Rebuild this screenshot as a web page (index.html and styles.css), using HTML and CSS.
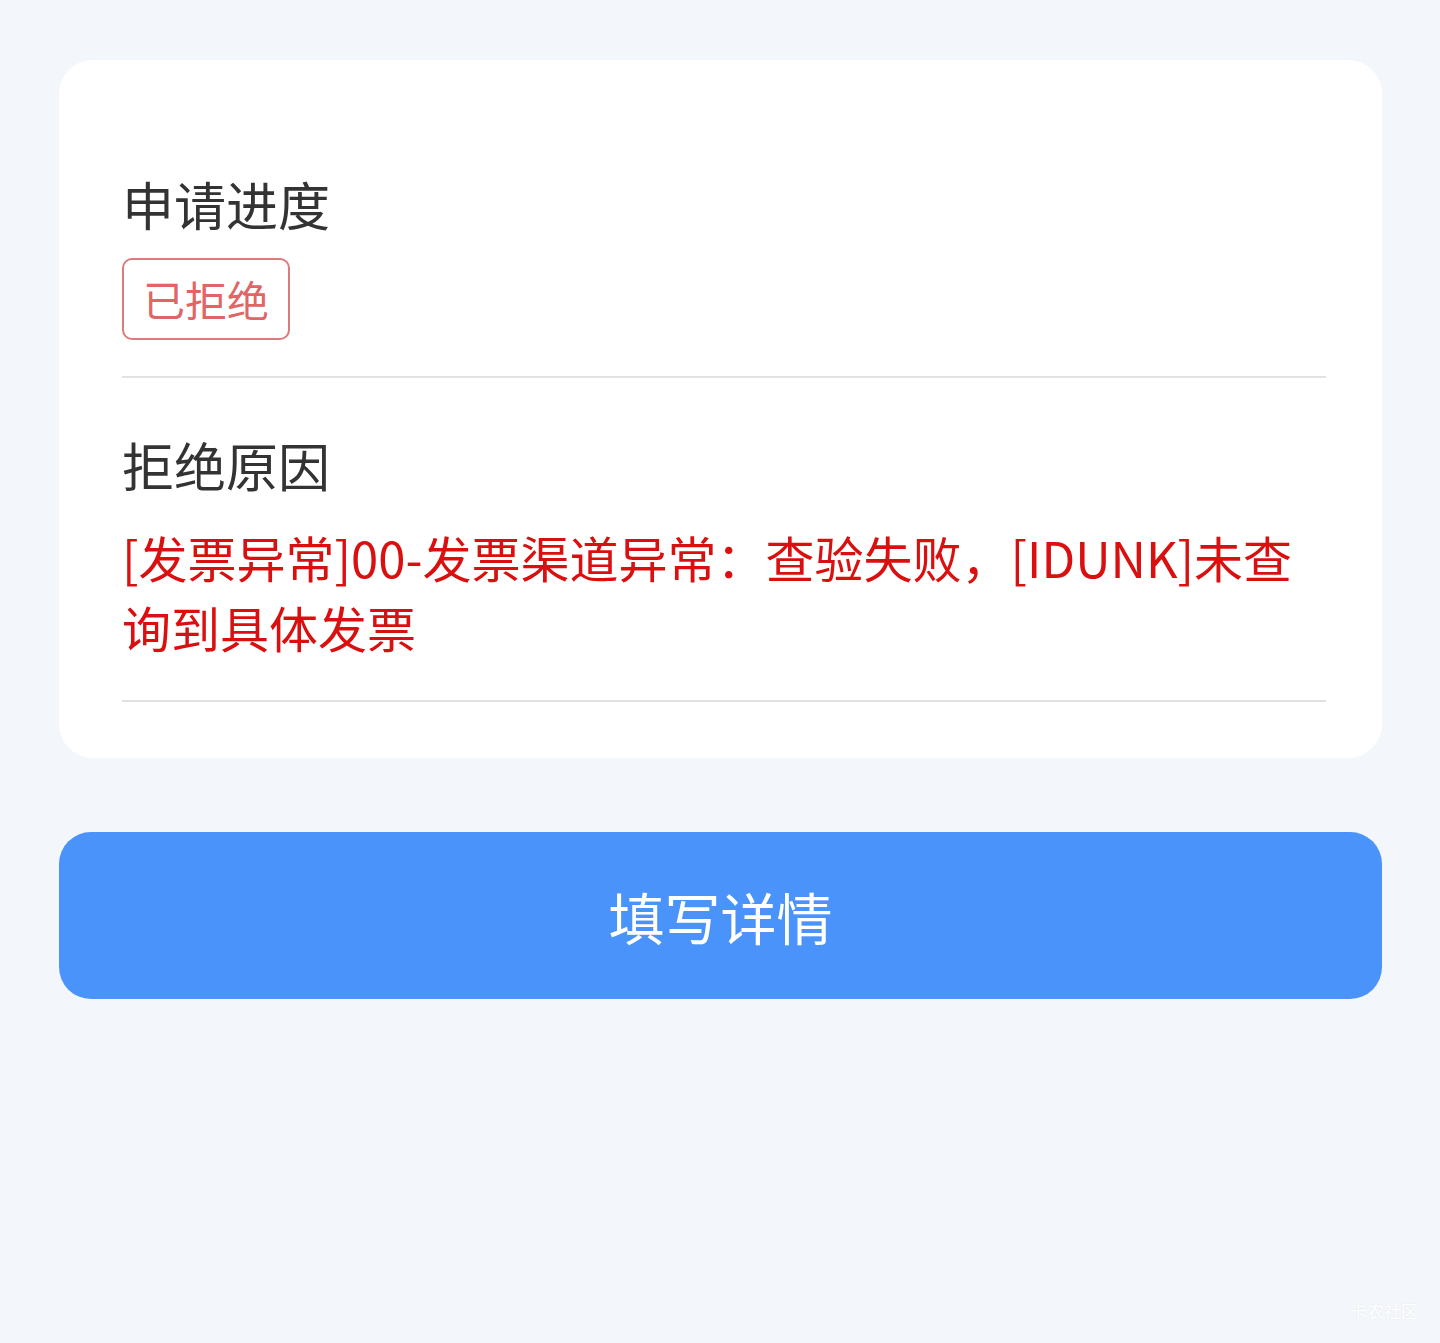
FILE: index.html
```html
<!DOCTYPE html>
<html lang="zh-CN">
<head>
    <meta charset="UTF-8">
    <meta name="viewport" content="width=device-width, initial-scale=1.0">
    <title>申请进度</title>
    <link rel="stylesheet" href="styles.css">
</head>
<body>
    <div class="page">
        <div class="card">
            <div class="section">
                <h2 class="title">申请进度</h2>
                <span class="tag">已拒绝</span>
            </div>
            <div class="section section-last">
                <h2 class="title">拒绝原因</h2>
                <p class="reason">[发票异常]00-发票渠道异常：查验失败，[IDUNK]未查询到具体发票</p>
            </div>
        </div>

        <button class="btn-fill">填写详情</button>
    </div>

    <div class="watermark">卡农社区</div>
</body>
</html>
```

FILE: styles.css
```css
/* 기본 */
body {
    margin: 0;
    padding: 0;
    background-color: #f3f7fb;
    font-family: "Noto Sans CJK SC", "Noto Sans", sans-serif;
    min-height: 1343px;
    position: relative;
}

.page {
    padding: 60px 58px 0 59px;
}

.card {
    background-color: #ffffff;
    border-radius: 34px;
    padding: 109px 56px 56px 63px;
}

.section {
    border-bottom: 2px solid #e2e2e2;
    padding-bottom: 36px;
}

.section-last {
    padding-top: 52px;
    padding-bottom: 38px;
}

.title {
    margin: 0;
    font-size: 52px;
    line-height: 70px;
    font-weight: 400;
    color: #333333;
}

.tag {
    display: inline-block;
    vertical-align: top;
    margin-top: 19px;
    padding: 0 19px;
    border: 2px solid #db7b7b;
    border-radius: 10px;
    font-size: 42px;
    line-height: 78px;
    color: #e06565;
}

.reason {
    margin: 22px 0 0;
    font-size: 49px;
    line-height: 70px;
    color: #d9100f;
    word-break: break-all;
}

.btn-fill {
    display: block;
    width: 100%;
    height: 167px;
    margin-top: 74px;
    border: none;
    border-radius: 32px;
    background-color: #4a93fb;
    color: #ffffff;
    font-family: inherit;
    font-size: 56px;
    cursor: pointer;
}

.watermark {
    position: absolute;
    right: 22px;
    bottom: 20px;
    font-size: 17px;
    color: #ffffff;
    text-shadow: 0 0 2px rgba(0, 0, 0, 0.08);
}
```
